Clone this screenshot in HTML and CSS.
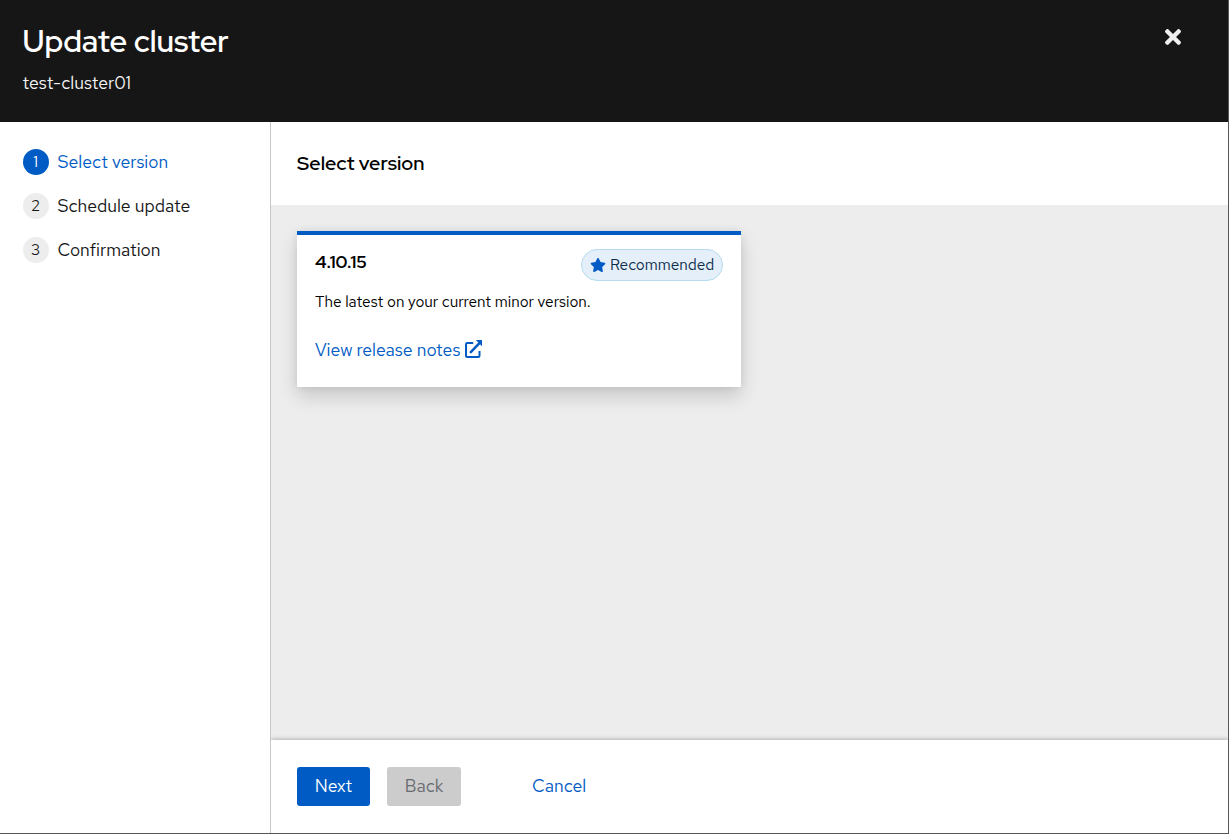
FILE: index.html
```html
<!DOCTYPE html>
<html lang="en">
<head>
<meta charset="utf-8">
<title>Update cluster</title>
<link rel="stylesheet" href="styles.css">
</head>
<body>
<div class="wizard">
  <header class="header">
    <div>
      <h1 class="title">Update cluster</h1>
      <p class="subtitle">test-cluster01</p>
    </div>
    <button class="close" aria-label="Close"><svg class="close-icon" viewBox="0 0 352 352"><path d="M243 176 343 76c12-12 12-32 0-44L321 9c-12-12-32-12-45 0L176 109 76 9C64-3 44-3 32 9L9 32c-12 12-12 32 0 44l100 100L9 276c-12 12-12 32 0 45l23 22c12 12 32 12 44 0l100-100 100 100c12 12 32 12 45 0l22-22c12-12 12-32 0-45z"/></svg></button>
  </header>
  <div class="body">
    <nav class="nav">
      <ol class="steps">
        <li class="step current"><span class="num">1</span><span>Select version</span></li>
        <li class="step"><span class="num">2</span><span>Schedule update</span></li>
        <li class="step"><span class="num">3</span><span>Confirmation</span></li>
      </ol>
    </nav>
    <section class="content">
      <h2 class="heading">Select version</h2>
      <main class="main">
        <article class="card">
          <div class="card-head">
            <h3 class="version">4.10.15</h3>
            <span class="label"><svg class="star" viewBox="20 0 536 512"><path d="m259 18-65 132-146 22c-26 4-37 36-18 54l106 103-25 145c-5 26 23 46 46 34l131-69 131 69c23 12 51-8 46-34l-25-145 106-103c19-18 8-50-18-54l-146-22-65-132c-12-24-46-24-58 0z"/></svg><span>Recommended</span></span>
          </div>
          <p class="description">The latest on your current minor version.</p>
          <a class="link"><span>View release notes</span><svg class="external" viewBox="0 0 17 18"><path d="M8.2 3.100H2.2Q1 3.100 1 4.300V15.800Q1 17 2.200 17H13.300Q14.500 17 14.500 15.800V11" fill="none" stroke="currentColor" stroke-width="2"/><path d="M5.800 12.200 14.200 3.400" fill="none" stroke="currentColor" stroke-width="2.500" stroke-linecap="round"/><path d="M10.800 0H16.400Q17 0 17 .6V6.200Z" fill="currentColor"/></svg></a>
        </article>
      </main>
      <footer class="footer">
        <button class="button primary">Next</button>
        <button class="button disabled" disabled>Back</button>
        <button class="button cancel">Cancel</button>
      </footer>
    </section>
  </div>
</div>
</body>
</html>
```

FILE: styles.css
```css
* { box-sizing: border-box; }
body {
  margin: 0;
  font-family: "Red Hat Text", Inter, sans-serif;
  font-size: 17.6px;
  color: #151515;
}
h1, h2, h3, p, ol { margin: 0; padding: 0; }
button { border: 0; padding: 0; font: inherit; background: none; }
.wizard {
  display: flex;
  flex-direction: column;
  width: 1229px;
  height: 834px;
  overflow: hidden;
  background: #fff;
  border-right: 1px solid #555;
  border-bottom: 1px solid #555;
}
.header {
  display: flex;
  justify-content: space-between;
  align-items: flex-start;
  height: 122px;
  flex: none;
  padding: 20px 47px 0 22.5px;
  background: #161616;
  color: #fff;
}
.title { font-family: "Red Hat Display", "Red Hat Text", Inter, sans-serif; font-size: 30.8px; font-weight: 600; line-height: 42px; }
.subtitle { margin-top: 8px; line-height: 26px; color: #f5f5f5; }
.close { display: flex; margin-top: 9px; }
.close-icon { width: 16px; height: 16px; fill: #f0f0f0; }
.body { display: flex; flex: 1; min-height: 0; }
.nav { width: 271px; flex: none; padding: 27px 23px; border-right: 1px solid #c7c7c7; }
.steps { display: flex; flex-direction: column; gap: 18px; list-style: none; }
.step { display: flex; gap: 8.4px; height: 26px; line-height: 26px; }
.num {
  width: 26px;
  height: 26px;
  padding-right: 1px;
  border-radius: 50%;
  background: #ededed;
  font-size: 15.4px;
  line-height: 26px;
  text-align: center;
}
.current { color: #005bc4; }
.current .num { background: #005bc4; color: #fff; }
.content { display: flex; flex-direction: column; flex: 1; min-width: 0; overflow: hidden; }
.heading {
  height: 83px;
  flex: none;
  padding-left: 26px;
  font-family: "Red Hat Display", "Red Hat Text", Inter, sans-serif;
  font-size: 19.8px;
  font-weight: 600;
  line-height: 83px;
  color: #000;
}
.main { flex: 1; padding: 26px; background: #ededed; }
.card {
  width: 444px;
  height: 156px;
  padding: 14px 18px 0;
  border-top: 4px solid #005bc4;
  background: #fff;
  box-shadow: 0 9px 18px rgba(3, 3, 3, .16), 0 0 7px rgba(3, 3, 3, .08);
}
.card-head { display: flex; justify-content: space-between; height: 40px; }
.version { font-family: "Red Hat Display", "Red Hat Text", Inter, sans-serif; font-size: 17.6px; font-weight: 700; line-height: 26px; color: #000; }
.label {
  display: flex;
  align-items: center;
  gap: 4px;
  width: 142px;
  height: 32px;
  padding: 0 0 1px 8px;
  border: 1px solid #b7dcf1;
  border-radius: 16px;
  background: #e4eff9;
  color: #0b2c4c;
  font-size: 15.4px;
  line-height: 29px;
}
.star { width: 16px; height: 14px; fill: #005bc4; }
.description { font-size: 15.4px; line-height: 26px; color: #000; }
.link { display: flex; align-items: center; gap: 4.5px; margin-top: 22px; line-height: 26px; color: #005bc4; }
.external { width: 17px; height: 18px; margin-top: -2px; }
.footer {
  position: relative;
  display: flex;
  height: 93px;
  flex: none;
  padding: 27px 26px 0;
  background: #fff;
  box-shadow: 0 -1px 4px rgba(3, 3, 3, .25);
}
.button { height: 39px; padding-bottom: 1px; border-radius: 3px; line-height: 38px; }
.primary { width: 73px; background: #005bc4; color: #fff; }
.disabled { width: 74px; margin-left: 17px; background: #ccc; color: #686b70; }
.cancel { margin-left: 71px; color: #005bc4; }
```
